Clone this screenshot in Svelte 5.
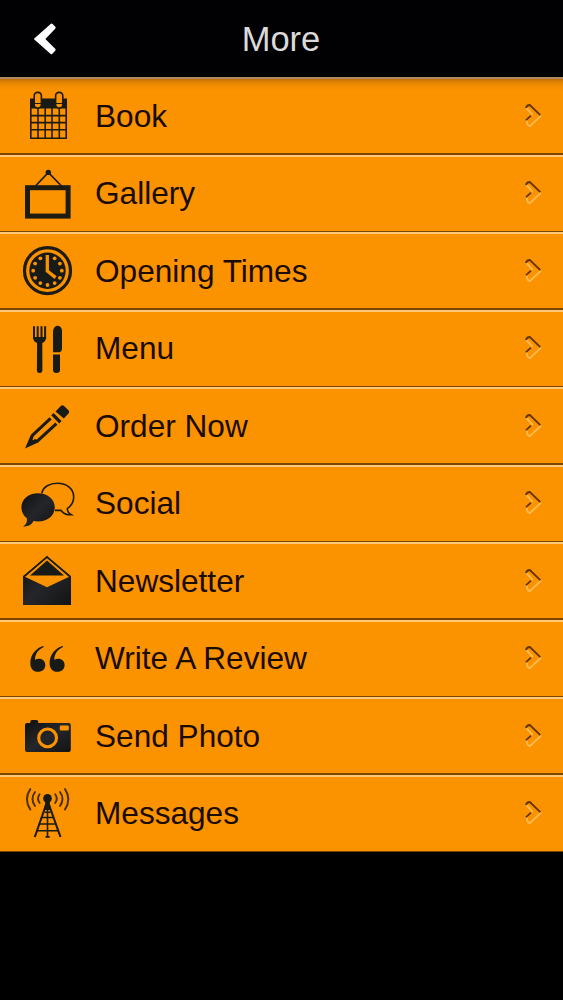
<script lang="ts">
  const items = [
    { icon: 'book', label: 'Book' },
    { icon: 'gallery', label: 'Gallery' },
    { icon: 'clock', label: 'Opening Times' },
    { icon: 'menu', label: 'Menu' },
    { icon: 'order', label: 'Order Now' },
    { icon: 'social', label: 'Social' },
    { icon: 'newsletter', label: 'Newsletter' },
    { icon: 'review', label: 'Write A Review' },
    { icon: 'photo', label: 'Send Photo' },
    { icon: 'messages', label: 'Messages' }
  ];

  // dots on the clock face, 12 o'clock is covered by the hand
  const hours = [1, 2, 3, 4, 5, 6, 7, 8, 9, 10, 11].map(h => {
    const a = h * Math.PI / 6;
    return { x: 47.5 + 14.3 * Math.sin(a), y: 38.7 - 14.3 * Math.cos(a) };
  });
</script>

<div class="screen">
  <header>
    <button class="back" aria-label="Back">
      <svg width="24" height="34" viewBox="0 0 24 34">
        <path d="M17.6 1.9Q18.6 1 19.6 2L22.3 4.8Q23.2 5.8 22.2 6.8L12.4 17L22.2 26.8Q23.2 27.8 22.2 28.8L19.4 31.7Q18.4 32.7 17.4 31.7L1.3 17.6Q.7 17 1.3 16.4Z" fill="#fff" />
      </svg>
    </button>
    <h1>More</h1>
  </header>

  <ul>
    {#each items as item}
      <li>
        <svg class="icon" width="95" height="77.5" viewBox="0 0 95 77.5">
          <defs>
            <linearGradient id="shine" x1="0" y1="0" x2="1" y2="1">
              <stop offset="0" stop-color="#0e0f0e" />
              <stop offset=".5" stop-color="#24262a" />
              <stop offset="1" stop-color="#111313" />
            </linearGradient>
          </defs>
          {#if item.icon === 'book'}
            <path class="ink" d="M30 21.5H67V31.5H30Z" />
            <path class="line" stroke-width="1.6" d="M30.8 31V61.2H66.2V31M38 31V61M45.2 31V61M52 31V61M59.3 31V61M30 38.6H67M30 45.6H67M30 52.8H67" />
            <rect class="ring" x="34.2" y="15.4" width="7.2" height="15.6" rx="3.4" />
            <rect class="ring" x="55.6" y="15.4" width="7.2" height="15.6" rx="3.4" />
            <path class="line" stroke-width="1.2" d="M34.4 26.5h7M55.6 26.5h7" />
          {:else if item.icon === 'gallery'}
            <circle class="ink" cx="48.3" cy="17.4" r="2.7" />
            <path class="line" stroke-width="1.7" d="M35.5 31L48.3 17.5L61.5 31" />
            <rect class="line" stroke-width="5" x="27.5" y="32.7" width="40.6" height="28.4" />
          {:else if item.icon === 'clock'}
            <circle class="line" stroke-width="3.2" cx="47.5" cy="38.7" r="23" />
            <circle class="ink" cx="47.5" cy="38.7" r="18.2" />
            {#each hours as dot}
              <circle class="cut" cx={dot.x} cy={dot.y} r="1.9" />
            {/each}
            <path d="M47.3 23V39L55.6 45.6" fill="none" stroke="#fb9300" stroke-width="3.3" />
          {:else if item.icon === 'menu'}
            <path class="line" stroke-width="2" d="M34 16.2V29M37.7 16.2V29M41.5 16.2V29M45.1 16.2V29" />
            <path class="ink" d="M33 27H46.1C46.1 30.5 44.5 32.2 42.3 33L42.4 60.5Q42.2 63 39.7 63Q37 63 36.9 60.5L37.1 33C34.8 32.2 33 30.5 33 27Z" />
            <path class="ink" d="M53 42.2V23C53 18.2 55 15.8 57.8 15.8Q62 16.5 62 21V38Q62 42 59.4 42.2ZM53 44.6H60V60Q60 63 56.5 63Q53 63 53 60Z" />
          {:else if item.icon === 'order'}
            <path class="ink" d="M55.5 24.5L60.8 19.1Q62.3 17.5 64 19L68.5 23.3Q70 24.8 68.5 26.5L63.8 31.5Z" />
            <path class="ink" d="M53.6 26.1L61.5 34.1L59.3 36.4L51.2 28.3Z" />
            <path class="line" stroke-width="3.1" stroke-linejoin="round" d="M50.6 31.3L32.4 48.3L31.2 54.3L37.6 53.9L56.4 36.6" />
            <path class="ink" d="M30.6 48.5L38.6 55.2L25 61.5Z" />
            <path d="M33.2 53L34.6 50L48.6 37" fill="none" stroke="#fb9300" stroke-width="1.6" />
          {:else if item.icon === 'social'}
            <path class="line" stroke-width="1.6" d="M41.8 28.3C43 21.5 50 18.3 57.3 18.3C67 18.3 73.7 24 73.7 32C73.7 37 71 41 67.3 43.6C67.3 46.2 68.6 48.3 71.3 49.8C67 50 63 48.3 60.8 45.2L55 45.4" />
            <path class="shiny" d="M38 28.3C47.4 28.3 54.8 34.4 54.8 42.3C54.8 50.5 47.5 56.5 38 56.5Q35.6 56.5 33.5 56.1C31.8 60 27.8 62 23 61.4C26 59.5 27.4 57 26.8 53.3C23.4 50.6 21.4 46.7 21.4 42.3C21.4 34.4 28.6 28.3 38 28.3Z" />
          {:else if item.icon === 'newsletter'}
            <path class="shiny" fill-rule="evenodd" d="M23 34.2L47 14L71 34.2V63H23ZM24.8 34.7L47 45.2L69.2 34.7L47 15.9Z" />
            <path class="ink" d="M47 18.5L64 33.6H30Z" />
            <path class="line" stroke-width="1.6" d="M24 34.6L46.9 15L70 34.6" />
          {:else if item.icon === 'review'}
            <path class="ink" d="M43.4 26.1C37 27.7 30.3 34.2 30.3 42.9C30.3 48.3 33.3 51.8 38 51.8C42.3 51.8 45.3 49 45.3 45C45.3 41.2 42.5 38.8 39 38.8Q36.3 38.8 35 40C34.9 33.8 38.4 29.5 43.8 27Z" />
            <path class="ink" d="M62.7 26.1C56.3 27.7 49.6 34.2 49.6 42.9C49.6 48.3 52.6 51.8 57.3 51.8C61.6 51.8 64.6 49 64.6 45C64.6 41.2 61.8 38.8 58.3 38.8Q55.6 38.8 54.3 40C54.2 33.8 57.7 29.5 63.1 27Z" />
          {:else if item.icon === 'photo'}
            <path class="shiny" d="M27 26H30.3V24.5Q30.3 23 32 23H36.5Q38.2 23 38.2 24.5V26H68.7Q70.8 26 70.8 28V53Q70.8 55 68.7 55H27Q25 55 25 53V28Q25 26 27 26Z" />
            <circle cx="47.6" cy="40.9" r="8.9" fill="none" stroke="#fb9300" stroke-width="3.1" />
            <rect class="cut" x="59.8" y="28.6" width="9" height="4.8" rx=".8" />
          {:else}
            <circle class="ink" cx="47.5" cy="23.4" r="4.3" />
            <path class="line" stroke-width="2.1" d="M47 27L34.8 62M48 27L60.5 62" />
            <path class="line" stroke-width="1.6" d="M47.5 26V62M44.5 37.2H50.7M42 42.5H53M39.7 49H55.5M37 55.8H58M45.5 61.9H49.7" />
            <path class="ink" d="M45.4 27H49.6L51 35H44Z" />
            <path class="line arcs" d="M39.6 19.3Q36.5 23.5 39.6 28M35 17Q30 23.7 35 31M30.3 14.1Q23.5 24 30.3 34.6M55.2 19.3Q58.3 23.5 55.2 28M60 17Q65 23.7 60 31M65 14.1Q71.7 24 65 34.6" />
          {/if}
        </svg>
        <span>{item.label}</span>
        <svg class="arrow" width="20" height="28" viewBox="0 0 20 28">
          <path d="M3.4 6L9.2 12.4M4 19.4Q3.6 23 6.8 24.2L17.4 14.2" fill="none" stroke="#ffb950" stroke-width="1.9" stroke-linecap="round" />
          <path d="M3 6.2Q3.5 3.2 6.8 3L17.3 13.2M3 18.2L8 13.6" fill="none" stroke="#653400" stroke-width="1.8" />
        </svg>
      </li>
    {/each}
  </ul>
</div>

<style>
  :global(body){background: #000;}

  .screen{
    min-height: 1000px;
    background: #000;
    font-family: "Liberation Sans", Arial, sans-serif;
  }

  header{
    display: grid;
    grid-template-columns: 90px 1fr 90px;
    align-items: center;
    height: 77px;
    background: #010002;
  }
  .back{
    justify-self: start;
    display: flex;
    margin: 1px 0 0 33px;
    padding: 0;
    border: 0;
    background: none;
  }
  h1{
    margin: 0 1px 0 0;
    font-size: 34.5px; font-weight: 400;
    line-height: 40px;
    text-align: center;
    color: #dcdad9;
  }

  ul{margin: 0; padding: 0; list-style: none;}
  li{
    display: flex;
    align-items: center;
    height: 77.5px;
    background: linear-gradient(#ffc878 0 1.8px, #fb9300 1.8px 76px, #794500 76px);
  }
  li:first-child{
    background: linear-gradient(#ad8b68 0 1.5px, #ba6c06 1.5px, #df8202 5px, #f68f00 10px, #fb9300 15px 76px, #794500 76px);
  }
  span{
    flex: 1;
    font-size: 31.6px;
    line-height: 40px;
    color: #1a0b03;
  }
  .icon{flex: none;}
  .arrow{margin-right: 20px;}

  .ink{fill: #171a16;}
  .shiny{fill: url(#shine);}
  .cut{fill: #fb9300;}
  .line{fill: none; stroke: #1d1b12;}
  .ring{fill: #fb9300; stroke: #1d1b12; stroke-width: 1.6;}
  .arcs{stroke: #4b2d08; stroke-width: 1.9; stroke-linecap: round;}
</style>
